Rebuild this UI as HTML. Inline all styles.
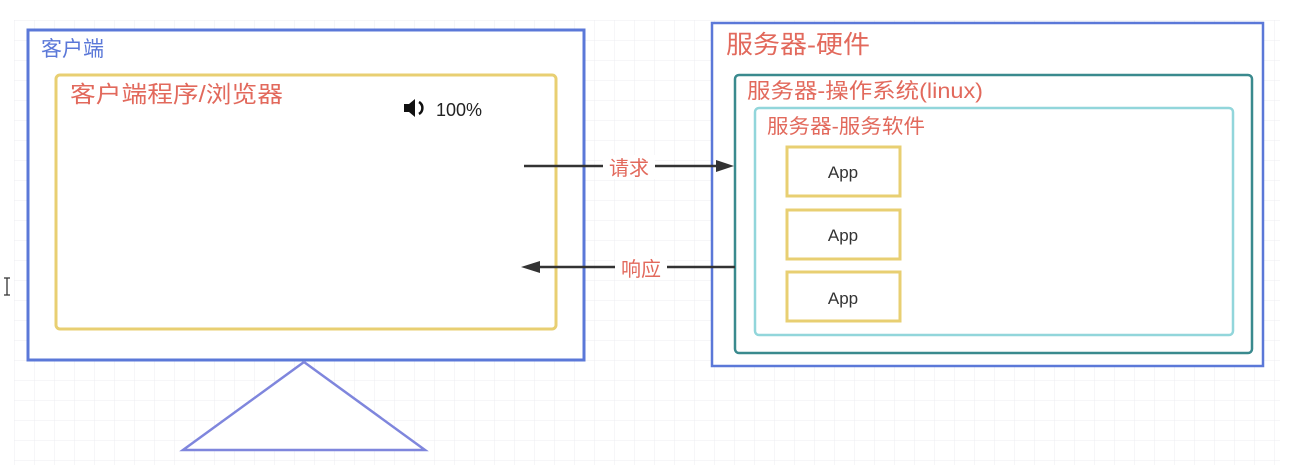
<!DOCTYPE html>
<html><head><meta charset="utf-8"><style>
html,body{margin:0;padding:0;background:#fff;width:1289px;height:473px;overflow:hidden}
svg{display:block}
text{font-family:"Liberation Sans","Noto Sans CJK SC",sans-serif}
</style></head><body>
<svg width="1289" height="473" viewBox="0 0 1289 473">
<defs>
<pattern id="g" x="14" y="20" width="20" height="20" patternUnits="userSpaceOnUse">
<path d="M0 0H20M0 0V20" stroke="#ececf0" stroke-width="1" fill="none"/>
</pattern>
</defs>
<rect x="14" y="20" width="1266" height="445" fill="url(#g)"/>
<!-- client -->
<rect x="28" y="30" width="556" height="330" fill="#fff" stroke="#5b78d8" stroke-width="3"/>
<text x="41" y="56" font-size="21" fill="#5b78d8">客户端</text>
<rect x="56" y="75" width="500" height="254" rx="4" fill="#fff" stroke="#e8cf72" stroke-width="3"/>
<text x="70" y="102" font-size="23" fill="#e2695c" textLength="213" lengthAdjust="spacingAndGlyphs">客户端程序/浏览器</text>
<path d="M404 104h5l6-5v18l-6-5h-5z" fill="#111"/>
<path d="M419 102a7 7 0 0 1 0 12" stroke="#111" stroke-width="2.5" fill="none"/>
<text x="436" y="116" font-size="18" fill="#222">100%</text>
<polygon points="304,362 183,450 425,450" fill="#fff" stroke="#7f86dd" stroke-width="2.5"/>
<!-- server -->
<rect x="712" y="23" width="551" height="343" fill="#fff" stroke="#5b78d8" stroke-width="2.5"/>
<text x="726" y="53" font-size="25" fill="#e2695c" textLength="144" lengthAdjust="spacingAndGlyphs">服务器-硬件</text>
<rect x="735" y="75" width="517" height="278" rx="4" fill="#fff" stroke="#3a8a8e" stroke-width="2.5"/>
<text x="747" y="98" font-size="21" fill="#e2695c" textLength="236" lengthAdjust="spacingAndGlyphs">服务器-操作系统(linux)</text>
<rect x="755" y="108" width="478" height="227" rx="4" fill="#fff" stroke="#92d6db" stroke-width="2.5"/>
<text x="767" y="133" font-size="20" fill="#e2695c" textLength="158" lengthAdjust="spacingAndGlyphs">服务器-服务软件</text>
<rect x="787" y="147" width="113" height="49" fill="#fff" stroke="#e8cf72" stroke-width="3"/>
<text x="843" y="178" font-size="17" fill="#333" text-anchor="middle">App</text>
<rect x="787" y="210" width="113" height="49" fill="#fff" stroke="#e8cf72" stroke-width="3"/>
<text x="843" y="241" font-size="17" fill="#333" text-anchor="middle">App</text>
<rect x="787" y="272" width="113" height="49" fill="#fff" stroke="#e8cf72" stroke-width="3"/>
<text x="843" y="304" font-size="17" fill="#333" text-anchor="middle">App</text>
<!-- arrows -->
<line x1="524" y1="166" x2="720" y2="166" stroke="#333" stroke-width="2.5"/>
<polygon points="734,166 716,160 716,172" fill="#333"/>
<rect x="603" y="155" width="52" height="24" fill="#fff"/>
<text x="629" y="175" font-size="20" fill="#e2695c" text-anchor="middle">请求</text>
<line x1="536" y1="267" x2="735" y2="267" stroke="#333" stroke-width="2.5"/>
<polygon points="521,267 540,261 540,273" fill="#333"/>
<rect x="615" y="256" width="52" height="24" fill="#fff"/>
<text x="641" y="276" font-size="20" fill="#e2695c" text-anchor="middle">响应</text>
<path d="M4 278h6M7 278v17M4 295h6" stroke="#333" stroke-width="1.3" fill="none"/>
</svg>
</body></html>
